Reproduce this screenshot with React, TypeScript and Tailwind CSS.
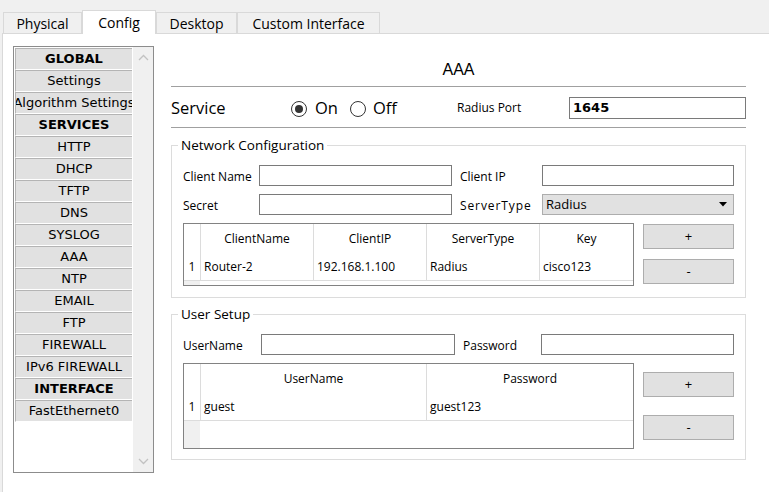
import React from 'react';

const SIDEBAR: { label: string; bold?: boolean }[] = [
  { label: 'GLOBAL', bold: true },
  { label: 'Settings' },
  { label: 'Algorithm Settings' },
  { label: 'SERVICES', bold: true },
  { label: 'HTTP' },
  { label: 'DHCP' },
  { label: 'TFTP' },
  { label: 'DNS' },
  { label: 'SYSLOG' },
  { label: 'AAA' },
  { label: 'NTP' },
  { label: 'EMAIL' },
  { label: 'FTP' },
  { label: 'FIREWALL' },
  { label: 'IPv6 FIREWALL' },
  { label: 'INTERFACE', bold: true },
  { label: 'FastEthernet0' },
];

const TABS = [
  { label: 'Physical', w: 'w-[79px]' },
  { label: 'Config', w: 'w-[74px]', active: true },
  { label: 'Desktop', w: 'w-[81px]' },
  { label: 'Custom Interface', w: 'w-[143px]' },
];

const seg = "font-['Open_Sans',sans-serif]";
const tah = "font-['DejaVu_Sans',sans-serif]";

function Radio({ checked }: { checked?: boolean }) {
  return (
    <span className="w-[16px] h-[16px] rounded-full border border-[#333] bg-white flex items-center justify-center">
      {checked && <span className="w-[8px] h-[8px] rounded-full bg-[#333]" />}
    </span>
  );
}

function TextBox({ w }: { w: string }) {
  return <div className={`${w} h-[21px] border border-[#7a7a7a] bg-white`} />;
}

function SideButton({ label }: { label: string }) {
  return (
    <div className={`${seg} w-[91px] h-[25px] bg-[#e1e1e1] border border-[#adadad] flex items-center justify-center text-[13px] text-black`}>
      {label}
    </div>
  );
}

interface Col {
  title: string;
  w: string;
}

function DataTable({ cols, row, h }: { cols: Col[]; row: string[]; h: string }) {
  return (
    <div className={`${seg} w-[451px] ${h} border border-[#828282] bg-white flex flex-col text-[12px] text-black`}>
      <div className="flex h-[28px]">
        <div className="w-[16px]" />
        {cols.map((c) => (
          <div key={c.title} className={`${c.w} border-l border-[#dcdcdc] flex items-center justify-center pt-[2px]`}>
            {c.title}
          </div>
        ))}
      </div>
      <div className="flex h-[29px] border-b border-[#dcdcdc]">
        <div className="w-[16px] flex items-center justify-center pt-[2px]">1</div>
        {cols.map((c, i) => (
          <div key={c.title} className={`${c.w} border-l border-[#dcdcdc] flex items-center pl-[3px] pt-[2px]`}>
            {row[i]}
          </div>
        ))}
      </div>
      <div className="flex flex-1">
        <div className="w-[16px] bg-[#f0f0f0]" />
      </div>
    </div>
  );
}

export default function App() {
  return (
    <div className="w-[769px] h-[492px] bg-[#f0f0f0] overflow-hidden flex flex-col">
      {/* tabs */}
      <div className="h-[23px] mt-[10px] flex items-end pl-[3px]">
        {TABS.map((t) =>
          t.active ? (
            <div
              key={t.label}
              className={`${t.w} ${seg} h-[24px] -mb-px relative z-10 bg-white border-x border-t border-[#d9d9d9] flex items-center justify-center text-[14px] text-black`}
            >
              {t.label}
            </div>
          ) : (
            <div
              key={t.label}
              className={`${t.w} ${seg} h-[21px] bg-[#f0f0f0] border-x border-t border-[#d9d9d9] flex items-center justify-center text-[14px] text-black`}
            >
              {t.label}
            </div>
          )
        )}
      </div>

      <div className="flex-1 ml-[2px] bg-white border-t border-l border-[#d9d9d9] flex pl-[10px] pt-[12px]">
        {/* sidebar list */}
        <div className="w-[141px] h-[427px] border border-[#8c8c8c] flex">
          <div className="w-[117px] ml-px mt-px flex flex-col">
            {SIDEBAR.map((s) => (
              <div
                key={s.label}
                className={`${tah} h-[22px] bg-[#e1e1e1] border-t border-l border-[#b4b4b4] border-b border-b-white flex items-center justify-center overflow-hidden whitespace-nowrap text-[13px] text-black ${s.bold ? 'font-bold' : ''}`}
              >
                {s.label}
              </div>
            ))}
          </div>
          <div className="w-px" />
          <div className="w-[20px] bg-[#f0f0f0] flex flex-col items-center justify-between py-[7px]">
            <svg width="11" height="7" viewBox="0 0 11 7">
              <path d="M1 6 L5.5 1.5 L10 6" fill="none" stroke="#c2c2c2" strokeWidth="1.3" />
            </svg>
            <svg width="11" height="7" viewBox="0 0 11 7">
              <path d="M1 1 L5.5 5.5 L10 1" fill="none" stroke="#c2c2c2" strokeWidth="1.3" />
            </svg>
          </div>
        </div>

        {/* main */}
        <div className="w-[575px] ml-[17px] flex flex-col">
          <div className="h-[40px] flex items-end justify-center pb-[7px]">
            <span className="font-['Liberation_Sans',sans-serif] text-[16px] leading-[18px] text-black">AAA</span>
          </div>

          <div className="h-[42px] border-y border-[#a0a0a0] flex items-center">
            <span className={`${seg} w-[120px] pt-[3px] text-[16.5px] text-black`}>Service</span>
            <div className={`${seg} w-[166px] pt-[3px] flex items-center text-[16.5px] text-black`}>
              <Radio checked />
              <span className="ml-[8px]">On</span>
              <span className="ml-[12px]" />
              <Radio />
              <span className="ml-[7px]">Off</span>
            </div>
            <span className={`${seg} w-[112px] pt-[2px] text-[12px] text-black`}>Radius Port</span>
            <div className={`${tah} flex-1 h-[22px] mt-[2px] border border-[#7a7a7a] flex items-center pl-[3px] text-[13px] font-bold text-black`}>
              1645
            </div>
          </div>

          {/* Network Configuration */}
          <fieldset className="mt-[8px] border border-[#dcdcdc] px-[11px] pt-[11px] pb-[11px]">
            <legend className={`${seg} ml-[-5px] px-[3px] text-[13.5px] leading-[18px] text-black`}>Network Configuration</legend>
            <div className={`${seg} flex items-center text-[12px] text-black`}>
              <span className="w-[76px] pt-[2px]">Client Name</span>
              <TextBox w="w-[193px]" />
              <span className="w-[82px] ml-[8px] pt-[2px]">Client IP</span>
              <TextBox w="w-[192px]" />
            </div>
            <div className={`${seg} flex items-center mt-[8px] text-[12px] text-black`}>
              <span className="w-[76px] pt-[2px]">Secret</span>
              <TextBox w="w-[193px]" />
              <span className="w-[82px] ml-[8px] pt-[2px] tracking-[0.9px]">ServerType</span>
              <div className="w-[192px] h-[21px] bg-[#e1e1e1] border border-[#adadad] flex items-center justify-between pl-[3px] pr-[6px] text-[13px]">
                <span className="pt-px">Radius</span>
                <svg width="8" height="5" viewBox="0 0 8 5">
                  <polygon points="0,0 8,0 4,4.5" fill="#000" />
                </svg>
              </div>
            </div>
            <div className="flex mt-[8px]">
              <DataTable
                h="h-[63px]"
                cols={[
                  { title: 'ClientName', w: 'w-[113px]' },
                  { title: 'ClientIP', w: 'w-[113px]' },
                  { title: 'ServerType', w: 'w-[113px]' },
                  { title: 'Key', w: 'w-[94px]' },
                ]}
                row={['Router-2', '192.168.1.100', 'Radius', 'cisco123']}
              />
              <div className="ml-[9px] pt-px flex flex-col gap-[10px]">
                <SideButton label="+" />
                <SideButton label="-" />
              </div>
            </div>
          </fieldset>

          {/* User Setup */}
          <fieldset className="mt-[7px] border border-[#dcdcdc] px-[11px] pt-[11px] pb-[10px]">
            <legend className={`${seg} ml-[-5px] px-[3px] text-[13.5px] leading-[18px] text-black`}>User Setup</legend>
            <div className={`${seg} flex items-center text-[12px] text-black`}>
              <span className="w-[78px] pt-[2px]">UserName</span>
              <TextBox w="w-[194px]" />
              <span className="w-[78px] ml-[8px] pt-[2px]">Password</span>
              <TextBox w="w-[193px]" />
            </div>
            <div className="flex mt-[8px]">
              <DataTable
                h="h-[86px]"
                cols={[
                  { title: 'UserName', w: 'w-[226px]' },
                  { title: 'Password', w: 'w-[207px]' },
                ]}
                row={['guest', 'guest123']}
              />
              <div className="ml-[9px] pt-[9px] flex flex-col gap-[18px]">
                <SideButton label="+" />
                <SideButton label="-" />
              </div>
            </div>
          </fieldset>
        </div>
      </div>
    </div>
  );
}
